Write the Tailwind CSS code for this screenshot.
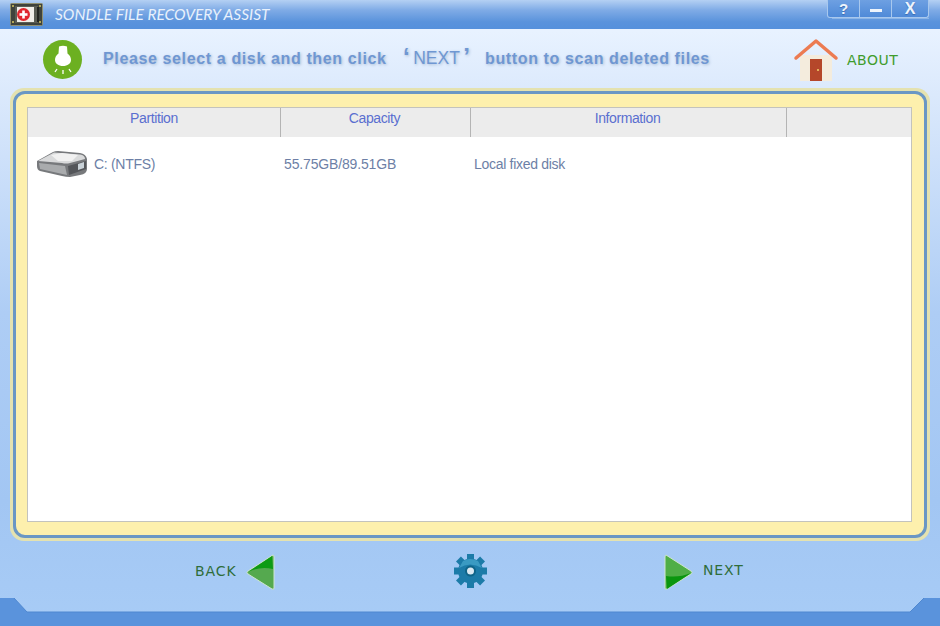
<!DOCTYPE html>
<html>
<head>
<meta charset="utf-8">
<script src="https://cdn.jsdelivr.net/npm/@tailwindcss/browser@4"></script>
</head>
<body class="m-0 overflow-hidden">
<div class="relative w-[940px] h-[626px] flex flex-col overflow-hidden bg-[linear-gradient(180deg,#e8f2ff_5%,#dbe9fc_15%,#aecdf5_50%,#a2c6f3_80%,#a8ccf6_100%)] font-['Liberation_Sans',sans-serif]">

    <!-- Title bar -->
    <div class="h-[29px] shrink-0 flex items-center bg-[linear-gradient(180deg,#b4d0f3_0%,#7fabe6_35%,#5a93dc_75%,#5590dc_100%)]">
        <div class="ml-[10px] w-[33px] h-[23px]">
            <svg width="33" height="23" viewBox="0 0 33 23">
                <rect x="0.5" y="0.5" width="32" height="22" rx="1" fill="#3f433c" stroke="#8f8f70"/>
                <rect x="5" y="3" width="23" height="17" fill="#5a5d54"/>
                <rect x="7" y="4" width="17" height="15" fill="#f0efe9"/>
                <circle cx="13.500" cy="11.500" r="6.500" fill="#e0262e"/>
                <rect x="9.500" y="10.200" width="8" height="2.600" fill="#fff"/>
                <rect x="12.200" y="7.500" width="2.600" height="8" fill="#fff"/>
                <path d="M2 3h2M2 19h2M29 3h2M29 19h2" stroke="#d8c860" stroke-width="1.500"/>
                <rect x="27" y="4" width="2" height="15" fill="#22241f"/>
            </svg>
        </div>
        <span class="ml-[12px] font-['Lato',sans-serif] text-[15.5px] italic text-[#e8f1fc] whitespace-nowrap">SONDLE FILE RECOVERY ASSIST</span>
    </div>

    <!-- Window buttons -->
    <div class="absolute top-0 left-[827px] w-[102px] h-[18px] flex border border-t-0 border-[#a8c8ee] rounded-b-[3px] bg-[linear-gradient(180deg,#6ea0e2,#4f8ad8)]">
        <div class="w-[32px] flex items-center justify-center border-r border-[#a8c8ee] text-[15px] leading-none font-bold text-[#eef4fc] [text-shadow:0_1px_1px_#3a6bb0]">?</div>
        <div class="w-[32px] flex items-center justify-center border-r border-[#a8c8ee]"><div class="w-[12px] h-[3px] mt-[3px] bg-[#eef4fc]"></div></div>
        <div class="flex-1 flex items-center justify-center text-[16px] leading-none font-bold text-[#eef4fc] [text-shadow:0_1px_1px_#3a6bb0]">X</div>
    </div>
    <div class="absolute top-[18px] left-[832px] w-[97px] h-px bg-[#9dc0ea]/70"></div>

    <!-- Hint row -->
    <div class="h-[59px] shrink-0 flex items-center">
        <div class="ml-[43px] mt-[2px] w-[39px] h-[39px] rounded-full bg-[#6cb021] flex items-center justify-center">
            <svg width="22" height="32" viewBox="0 0 22 32">
                <path d="M7 2.500q4-1.500 8 0l.5 7c2.500 2 3.500 4 3.500 6.500 0 3.500-3.500 6-8 6s-8-2.500-8-6c0-2.500 1-4.500 3.500-6.500z" fill="#fff"/>
                <path d="M11 26v4M5 25l-2 3M17 25l2 3" stroke="#fff" stroke-width="1.300" fill="none"/>
            </svg>
        </div>
        <div class="ml-[21px] flex items-center text-[16px] font-bold text-[#6f97d2] tracking-[0.63px] whitespace-nowrap [text-shadow:1px_1px_3px_#a9bcd6]">
            <span class="w-[300px]">Please select a disk and then click</span>
            <span class="w-[67px] mr-[15px] flex justify-between items-center font-normal text-[17.5px] tracking-normal">
                <span class="font-bold text-[24px] leading-none -mt-[4px]">‘</span>
                <span>NEXT</span>
                <span class="font-bold text-[24px] leading-none -mt-[4px]">’</span>
            </span>
            <span>button to scan deleted files</span>
        </div>
        <div class="ml-auto w-[46px] h-[44px] mt-[2px]">
            <svg width="46" height="44" viewBox="0 0 46 44">
                <rect x="7" y="17" width="32" height="26" fill="#f4ecdd"/>
                <rect x="17" y="21" width="12" height="22" fill="#b5472a"/>
                <circle cx="25" cy="32" r="1" fill="#f2d36a"/>
                <path d="M3 20 L23 3 L43 20" fill="none" stroke="#ec7b52" stroke-width="3.500" stroke-linecap="round" stroke-linejoin="round"/>
            </svg>
        </div>
        <span class="ml-[8px] mr-[43px] mt-[4px] w-[50px] font-['DejaVu_Sans',sans-serif] text-[14px] text-[#3f9c2c] tracking-[0.5px] whitespace-nowrap">ABOUT</span>
    </div>

    <!-- Main panel -->
    <div class="mx-[10px] h-[453px] shrink-0 rounded-[14px] bg-[#e4e2b0] p-[3px]">
        <div class="h-full rounded-[12px] border-[3px] border-[#6a97c4] bg-[#fdf0ad] pl-[11px] pr-[12px] pt-[13px] pb-[13px]">
            <div class="h-full bg-white border border-[#c3c3bd]">
                <div class="h-[29px] flex bg-[#ececec] text-[14px] tracking-[-0.4px] text-[#5a6fd0]">
                    <div class="w-[253px] pb-[8px] flex items-center justify-center border-r border-[#b4b4b4]">Partition</div>
                    <div class="w-[190px] pb-[8px] pr-[2px] flex items-center justify-center border-r border-[#b4b4b4]">Capacity</div>
                    <div class="w-[316px] pb-[8px] pr-[2px] flex items-center justify-center border-r border-[#b4b4b4]">Information</div>
                </div>
                <div class="h-[54px] flex items-center text-[14px] tracking-[-0.3px] text-[#6d7fa6]">
                    <div class="w-[253px] flex items-center">
                        <svg class="ml-[8px]" width="52" height="28" viewBox="0 0 52 28">
                            <path d="M1 11 L17 2 Q19 1 22 1 L44 3 Q50 4 51 9 L51 19 Q51 24 44 25 L34 27 Q30 27 26 26 L4 21 Q1 20 1 16z" fill="#77797c"/>
                            <path d="M2 11 L18 2.500 L44 4.500 Q49 5 49 9 L34 13 Q30 14 26 13z" fill="#d9dadb"/>
                            <path d="M15 5 L26 3 L42 5 L36 11 L22 11z" fill="#f1f1f1"/>
                            <path d="M3 13 L29 16 L31 25 L4 19z" fill="#a9abad"/>
                            <path d="M32 16 L50 11 L50 19 L33 25z" fill="#54565a"/>
                            <path d="M42 14 L48 12 L48 18 L42 20z" fill="#c9d2d8"/>
                        </svg>
                        <span class="ml-[6px]">C: (NTFS)</span>
                    </div>
                    <div class="w-[190px] pl-[3px] tracking-[-0.15px]">55.75GB/89.51GB</div>
                    <div class="pl-[3px]">Local fixed disk</div>
                </div>
            </div>
        </div>
    </div>

    <!-- Footer -->
    <div class="flex-1 relative">
        <div class="absolute left-[195px] top-[13px] flex items-center">
            <span class="w-[41px] -mt-[3px] font-['DejaVu_Sans',sans-serif] text-[14px] text-[#2f6d3a] tracking-[0.9px]">BACK</span>
            <svg class="ml-[10px]" width="29" height="37" viewBox="0 0 29 37">
                <path d="M27 1 Q28 1 28 3 L28 34 Q28 36 26 35 L2 20 Q0 18.500 2 17z" fill="#55a94f" stroke="#cfe6cf" stroke-width="1"/>
                <path d="M26 2 L2 18 Q14 12 27 15z" fill="#0d9b13"/>
            </svg>
        </div>
        <div class="absolute left-[454px] top-[12px] w-[33px] h-[36px]">
            <svg width="33" height="36" viewBox="0 0 33 36">
                <g stroke="#1c7ba8" stroke-width="7">
                    <path d="M16.500 1 V35"/>
                    <path d="M16.500 1 V35" transform="rotate(45 16.500 18)"/>
                    <path d="M16.500 1 V35" transform="rotate(90 16.500 18)"/>
                    <path d="M16.500 1 V35" transform="rotate(135 16.500 18)"/>
                </g>
                <circle cx="16.500" cy="18" r="12.500" fill="#1c7ba8"/>
                <path d="M5 15 Q16 8 28 15 L24 8 Q16 4 9 8z" fill="#3a9ac2"/>
                <circle cx="16.500" cy="18" r="5.500" fill="#0f6488"/>
                <circle cx="16.500" cy="18" r="3.500" fill="#dbe9f2"/>
            </svg>
        </div>
        <div class="absolute left-[664px] top-[13px] flex items-center">
            <svg width="29" height="37" viewBox="0 0 29 37">
                <path d="M2 1 Q1 1 1 3 L1 34 Q1 36 3 35 L27 20 Q29 18.500 27 17z" fill="#4fae46" stroke="#cfe6cf" stroke-width="1"/>
                <path d="M3 35 L27 19 Q15 24 2 22z" fill="#0a960f"/>
            </svg>
            <span class="ml-[10px] w-[41px] -mt-[5px] font-['DejaVu_Sans',sans-serif] text-[14px] text-[#2f6d3a] tracking-[0.9px]">NEXT</span>
        </div>
        <!-- Bottom band -->
        <svg class="absolute left-0 bottom-0" width="940" height="28" viewBox="0 0 940 28">
            <path d="M0 0 H14 L27 14 H910 L924 0 H940 V28 H0z" fill="#5a93dc"/>
            <path d="M14 0 L27 14 H910 L924 0" fill="none" stroke="#4f88d0" stroke-width="1"/>
        </svg>
    </div>
</div>
</body>
</html>
